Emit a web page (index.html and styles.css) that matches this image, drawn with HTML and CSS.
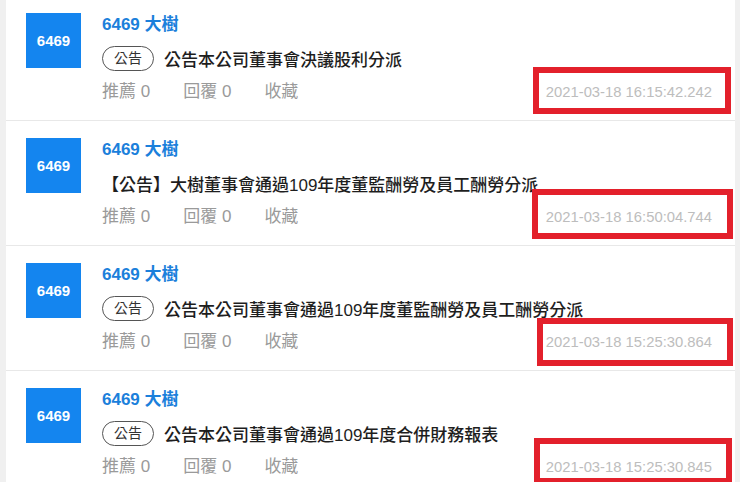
FILE: index.html
```html
<!DOCTYPE html>
<html>
<head>
  <meta charset="utf-8">
  <meta name="viewport" content="width=device-width, initial-scale=1.0">
  <title>6469 大樹</title>
  <link rel="stylesheet" href="styles.css">
</head>
<body>
  <div class="page">
    <!-- Post list -->
    <ul class="feed">
      <li class="post">
        <div class="post-logo">6469</div>
        <div class="post-body">
          <a class="post-stock" href="#">6469 大樹</a>
          <div class="post-title"><span class="tag">公告</span>公告本公司董事會決議股利分派</div>
          <div class="post-meta">
            <span class="meta-item">推薦 0</span>
            <span class="meta-item">回覆 0</span>
            <span class="meta-item">收藏</span>
            <span class="post-time">2021-03-18 16:15:42.242</span>
          </div>
        </div>
        <div class="mark"></div>
      </li>
      <li class="post">
        <div class="post-logo">6469</div>
        <div class="post-body">
          <a class="post-stock" href="#">6469 大樹</a>
          <div class="post-title">【公告】大樹董事會通過109年度董監酬勞及員工酬勞分派</div>
          <div class="post-meta">
            <span class="meta-item">推薦 0</span>
            <span class="meta-item">回覆 0</span>
            <span class="meta-item">收藏</span>
            <span class="post-time">2021-03-18 16:50:04.744</span>
          </div>
        </div>
        <div class="mark mark-2"></div>
      </li>
      <li class="post">
        <div class="post-logo">6469</div>
        <div class="post-body">
          <a class="post-stock" href="#">6469 大樹</a>
          <div class="post-title"><span class="tag">公告</span>公告本公司董事會通過109年度董監酬勞及員工酬勞分派</div>
          <div class="post-meta">
            <span class="meta-item">推薦 0</span>
            <span class="meta-item">回覆 0</span>
            <span class="meta-item">收藏</span>
            <span class="post-time">2021-03-18 15:25:30.864</span>
          </div>
        </div>
        <div class="mark mark-3"></div>
      </li>
      <li class="post">
        <div class="post-logo">6469</div>
        <div class="post-body">
          <a class="post-stock" href="#">6469 大樹</a>
          <div class="post-title"><span class="tag">公告</span>公告本公司董事會通過109年度合併財務報表</div>
          <div class="post-meta">
            <span class="meta-item">推薦 0</span>
            <span class="meta-item">回覆 0</span>
            <span class="meta-item">收藏</span>
            <span class="post-time">2021-03-18 15:25:30.845</span>
          </div>
        </div>
        <div class="mark mark-4"></div>
      </li>
    </ul>
  </div>
</body>
</html>
```

FILE: styles.css
```css
html {
  background-color: #ffffff;
}
body {
  margin: 0;
  font-family: "Liberation Sans", "Noto Sans CJK TC", sans-serif;
  color: #222222;
}
.page {
  height: 482px;
  overflow: hidden;
  padding: 0 5px 0 6px;
  background-color: #f0f0f0;
}
.feed {
  list-style: none;
  margin: -4px 0 0;
  padding: 0;
  background-color: #ffffff;
}
.post {
  position: relative;
  display: flex;
  align-items: flex-start;
  padding: 17px 22px 15px 20px;
  border-bottom: 1px solid #e8e8e8;
}
.post-logo {
  flex: none;
  width: 55px;
  height: 55px;
  margin-right: 21px;
  display: flex;
  align-items: center;
  justify-content: center;
  background-color: #1485ef;
  color: #ffffff;
  font-size: 15px;
  font-weight: bold;
}
.post-body {
  flex: 1;
  min-width: 0;
}
.post-stock {
  display: block;
  height: 24px;
  line-height: 24px;
  font-size: 17px;
  font-weight: bold;
  color: #1b80db;
  text-decoration: none;
}
.post-title {
  display: flex;
  align-items: center;
  height: 34px;
  margin-top: 4px;
  font-size: 17px;
  font-weight: 500;
  color: #1e1e1e;
  white-space: nowrap;
}
.tag {
  flex: none;
  height: 23px;
  line-height: 23px;
  padding: 0 11px;
  margin-right: 10px;
  border: 1px solid #555555;
  border-radius: 13px;
  font-size: 14px;
  font-weight: normal;
  color: #333333;
}
.post-meta {
  display: flex;
  align-items: baseline;
  height: 26px;
  line-height: 26px;
  margin-top: 4px;
  font-size: 17px;
  color: #9a9a9a;
}
.meta-item {
  margin-right: 33px;
}
.post-time {
  margin-left: auto;
  margin-right: 1px;
  font-size: 14.8px;
  color: #bdbdbd;
}
/* red annotation boxes drawn over the timestamps */
.mark {
  position: absolute;
  top: 71px;
  right: 4px;
  width: 198px;
  height: 47px;
  box-sizing: border-box;
  border: 6px solid #e3202b;
}
.mark-2 {
  top: 68px;
  right: 2px;
  width: 201px;
  height: 50px;
}
.mark-3 {
  top: 72px;
  right: 2px;
  width: 196px;
  height: 48px;
}
.mark-4 {
  top: 67px;
  right: 3px;
  width: 198px;
  height: 46px;
}
```
